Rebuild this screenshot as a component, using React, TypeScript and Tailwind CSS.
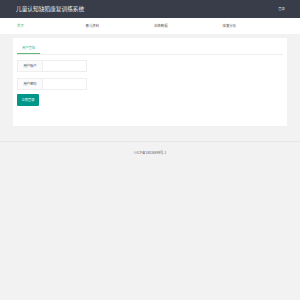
import React from "react";

export default function App() {
  const font = { fontFamily: '"Noto Sans CJK SC", "Noto Sans", sans-serif' };
  return (
    <div className="min-h-[300px] w-[300px] bg-[#f2f2f2]" style={font}>
      <div className="flex h-[18px] items-center justify-between bg-[#393d49] pl-[16px] pr-[15px]">
        <span className="text-[5.7px] leading-none text-[#eeeeee]">儿童认知缺陷康复训练系统</span>
        <span className="text-[3.4px] leading-none text-[#dddddd]">登录</span>
      </div>
      <div className="flex h-[16px] items-center bg-white pl-[17px]">
        <div className="w-[68.5px] text-[3.4px] leading-none text-[#5fb878]">首页</div>
        <div className="w-[68.5px] text-[3.4px] leading-none text-[#555555]">患儿资料</div>
        <div className="w-[68.5px] text-[3.4px] leading-none text-[#555555]">训练数据</div>
        <div className="w-[68.5px] text-[3.4px] leading-none text-[#555555]">康复分析</div>
      </div>
      <div className="mx-[13px] mt-[4px] h-[88px] bg-white px-[4px] pt-[4px]">
        <div className="flex h-[13px] border-b border-[#eeeeee]">
          <div className="flex w-[23px] items-center justify-center border-b-[1.5px] border-[#5fb878] text-[3.3px] leading-none text-[#3fb5a5]">
            用户登陆
          </div>
        </div>
        <div className="mt-[5px] flex h-[12px] w-[70px]">
          <div className="flex w-[26px] items-center justify-center border border-[#eeeeee] bg-[#fbfbfb] text-[3.3px] leading-none text-[#555555]">
            用户账户
          </div>
          <div className="flex-1 border border-l-0 border-[#eeeeee] bg-white" />
        </div>
        <div className="mt-[6px] flex h-[12px] w-[70px]">
          <div className="flex w-[26px] items-center justify-center border border-[#eeeeee] bg-[#fbfbfb] text-[3.3px] leading-none text-[#555555]">
            用户密码
          </div>
          <div className="flex-1 border border-l-0 border-[#eeeeee] bg-white" />
        </div>
        <div className="mt-[4px] flex h-[12px] w-[22px] items-center justify-center rounded-[1px] bg-[#009688] text-[3.3px] leading-none text-white">
          立即登录
        </div>
      </div>
      <div className="mt-[15px] flex h-[22px] items-center justify-center border-t border-[#e6e6e6] text-[3.3px] leading-none text-[#666666]">
        川ICP备18036899号-1
      </div>
    </div>
  );
}
